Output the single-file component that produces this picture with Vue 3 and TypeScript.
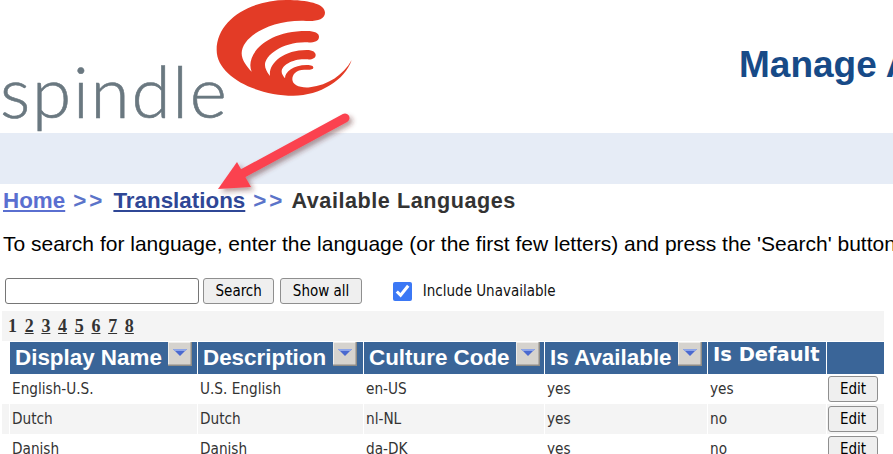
<script setup lang="ts">
const columns = [
  { label: "Display Name", sortable: true },
  { label: "Description", sortable: true },
  { label: "Culture Code", sortable: true },
  { label: "Is Available", sortable: true },
  { label: "Is Default", sortable: false },
]

const languages = [
  { name: "English-U.S.", description: "U.S. English", code: "en-US", available: "yes", isDefault: "yes" },
  { name: "Dutch", description: "Dutch", code: "nl-NL", available: "yes", isDefault: "no" },
  { name: "Danish", description: "Danish", code: "da-DK", available: "yes", isDefault: "no" },
]

const pages = [2, 3, 4, 5, 6, 7, 8]
</script>

<template>
  <div class="page">
    <header class="header">
      <div class="logo">
        <span class="wordmark">spindle</span>
        <svg class="swirl" viewBox="0 0 480 300" aria-hidden="true">
          <path
            fill="#e33b26"
            d="M455 180C435 240 360 287 280 287C170 287 50 230 50 150C50 60 150 0 260 0C320 0 375 10 375 38C375 60 345 65 310 62C210 60 125 110 125 160C125 180 140 200 155 215C135 170 190 93 320 93C345 93 357 100 357 110C357 125 340 128 320 127C250 125 195 165 195 195C195 205 200 215 210 228C205 190 250 150 320 150C340 150 347 158 347 165C347 175 335 180 320 178C280 175 245 195 245 215C245 222 250 228 255 235C255 215 280 195 320 195C335 195 340 198 340 203C340 208 330 210 315 209C290 208 277 222 277 238C277 255 300 265 330 262C385 255 430 225 455 180Z"
          />
        </svg>
      </div>
      <h1 class="title">Manage Available Languages</h1>
    </header>

    <div class="band"></div>

    <nav class="crumbs">
      <a class="home" href="#">Home</a>
      <span class="sep">&gt;&gt;</span>
      <a class="link" href="#">Translations</a>
      <span class="sep">&gt;&gt;</span>
      <span class="current">Available Languages</span>
    </nav>

    <p class="hint">To search for language, enter the language (or the first few letters) and press the 'Search' button.</p>

    <form class="search" @submit.prevent>
      <input class="field" type="text" />
      <button class="btn">Search</button>
      <button class="btn">Show all</button>
      <label class="check">
        <input type="checkbox" checked />
        <span>Include Unavailable</span>
      </label>
    </form>

    <div class="grid-wrap">
      <div class="pager">
        <span>1</span>
        <a v-for="p in pages" :key="p" href="#">{{ p }}</a>
      </div>
      <table class="grid">
        <colgroup>
          <col class="c0" />
          <col class="c1" />
          <col class="c2" />
          <col class="c3" />
          <col class="c4" />
          <col class="c5" />
          <col class="c6" />
        </colgroup>
        <thead>
          <tr>
            <th class="blank"></th>
            <th v-for="col in columns" :key="col.label" :class="{ plain: !col.sortable }">
              <div class="th-inner">
                <span>{{ col.label }}</span>
                <svg v-if="col.sortable" class="sort" viewBox="0 0 24 24" aria-hidden="true">
                  <rect width="24" height="24" fill="#d6d3ce" />
                  <path d="M0 0H24V1H1V24H0Z" fill="#efedea" />
                  <path d="M24 24H0V22.5H22.5V0H24Z" fill="#8f8c86" />
                  <path d="M5 7H19L12 14Z" fill="#4a69cf" />
                  <path d="M5 7H19L17.5 9H6.5Z" fill="#8ea6ea" />
                </svg>
              </div>
            </th>
            <th></th>
          </tr>
        </thead>
        <tbody>
          <tr v-for="(lang, i) in languages" :key="lang.code" :class="{ alt: i % 2 === 1 }">
            <td></td>
            <td>{{ lang.name }}</td>
            <td>{{ lang.description }}</td>
            <td>{{ lang.code }}</td>
            <td>{{ lang.available }}</td>
            <td>{{ lang.isDefault }}</td>
            <td class="action"><button class="btn edit">Edit</button></td>
          </tr>
        </tbody>
      </table>
    </div>

    <svg class="arrow" viewBox="0 0 893 454" aria-hidden="true">
      <defs>
        <filter id="arrow-shadow" x="-20%" y="-20%" width="140%" height="140%">
          <feDropShadow dx="3" dy="3" stdDeviation="2.5" flood-color="#5a2020" flood-opacity="0.45" />
        </filter>
      </defs>
      <g filter="url(#arrow-shadow)">
        <path d="M345 118L238 176" stroke="#fb4350" stroke-width="9" stroke-linecap="round" fill="none" />
        <path d="M218 189L237 162L251 187Z" fill="#fb4350" />
      </g>
    </svg>
  </div>
</template>

<style scoped>
.page {
  position: relative;
  width: 893px;
  height: 454px;
  overflow: hidden;
  background: #fff;
  font-family: "Liberation Sans", Arial, sans-serif;
}

.header {
  display: flex;
  height: 133px;
}

.logo {
  position: relative;
  flex: 0 0 739px;
  height: 133px;
}

.wordmark {
  display: block;
  margin-top: 48px;
  font-family: Lato, sans-serif;
  font-weight: 300;
  font-size: 71px;
  line-height: 86px;
  letter-spacing: 1.8px;
  -webkit-text-stroke: 0.6px #6a7880;
  color: #6a7880;
}

.swirl {
  position: absolute;
  left: 200px;
  top: 0;
  width: 160px;
  height: 100px;
}

.title {
  margin: 42px 0 0;
  font-size: 37px;
  line-height: 46px;
  font-weight: 700;
  white-space: nowrap;
  color: #174a87;
}

.band {
  height: 51px;
  background: #e6ecf6;
}

.crumbs {
  display: flex;
  gap: 8px;
  height: 34px;
  padding-left: 3px;
  align-items: center;
  font-size: 22.4px;
  font-weight: 700;
}

.home {
  color: #5a6fd0;
}

.link {
  color: #2f4796;
}

.sep {
  letter-spacing: 3px;
  color: #5b74c9;
}

.current {
  margin-left: -2px;
  font-size: 21.6px;
  letter-spacing: 0.55px;
  color: #333;
}

.hint {
  margin: 14px 0 0;
  padding-left: 3px;
  font-size: 21px;
  line-height: 24px;
  white-space: nowrap;
  color: #000;
}

.search {
  display: flex;
  align-items: center;
  gap: 4px;
  height: 26px;
  margin-top: 22px;
  padding-left: 5px;
}

.field {
  box-sizing: border-box;
  width: 194px;
  height: 26px;
  border: 1px solid #767676;
  border-radius: 3px;
  background: #fff;
}

.btn {
  box-sizing: border-box;
  height: 26px;
  padding: 0 11.5px;
  border: 1px solid #8f8f8f;
  border-radius: 3px;
  background: #efefef;
  font-family: "DejaVu Sans", sans-serif;
  font-stretch: condensed;
  font-size: 15px;
  color: #000;
}

.search .btn + .btn {
  margin-left: 2px;
}

.check {
  display: flex;
  align-items: center;
  gap: 11px;
  margin-left: 27px;
  font-family: "DejaVu Sans", sans-serif;
  font-stretch: condensed;
  font-size: 15px;
  color: #111;
}

.check input {
  width: 19px;
  height: 19px;
  margin: 0;
  accent-color: #3b78f5;
}

.grid-wrap {
  width: 882px;
  margin: 7px 0 0 2px;
}

.pager {
  display: flex;
  gap: 7.7px;
  height: 30px;
  padding-left: 6px;
  align-items: center;
  background: #f4f4f4;
  font-family: "Liberation Serif", serif;
  font-size: 18px;
  font-weight: 700;
  color: #333;
}

.pager a {
  color: #333;
}

.grid {
  table-layout: fixed;
  width: 882px;
  margin-top: 1px;
  border-collapse: separate;
  border-spacing: 1px 0;
  margin-left: -1px;
  font-family: "DejaVu Sans", sans-serif;
  font-stretch: condensed;
  font-size: 15.2px;
  color: #333;
}

.c0 { width: 7px; }
.c1 { width: 187px; }
.c2 { width: 165px; }
.c3 { width: 180px; }
.c4 { width: 162px; }
.c5 { width: 118px; }
.c6 { width: 57px; }

th {
  height: 30px;
  padding: 0 0 0 5px;
  background: #3a6598;
  color: #fff;
  text-align: left;
  vertical-align: top;
  font-size: 22.4px;
  font-family: "Liberation Sans", Arial, sans-serif;
  font-stretch: normal;
  font-weight: 700;
  white-space: nowrap;
  overflow: hidden;
}

th.blank {
  background: transparent;
  padding: 0;
}

th.plain {
  font-family: "DejaVu Sans", sans-serif;
  font-size: 19.5px;
}

th.plain .th-inner {
  line-height: 25px;
}

.th-inner {
  display: flex;
  gap: 6.5px;
  align-items: flex-start;
  line-height: 32px;
}

.sort {
  flex: none;
  width: 24px;
  height: 24px;
}

td {
  height: 30px;
  padding: 0 0 0 2px;
  white-space: nowrap;
}

.alt td {
  background: #f4f4f4;
}

.action {
  padding: 0 0 0 1px;
}

.edit {
  width: 50px;
  padding: 0;
  vertical-align: middle;
}

.arrow {
  position: absolute;
  left: 0;
  top: 0;
  width: 893px;
  height: 454px;
  pointer-events: none;
}
</style>
